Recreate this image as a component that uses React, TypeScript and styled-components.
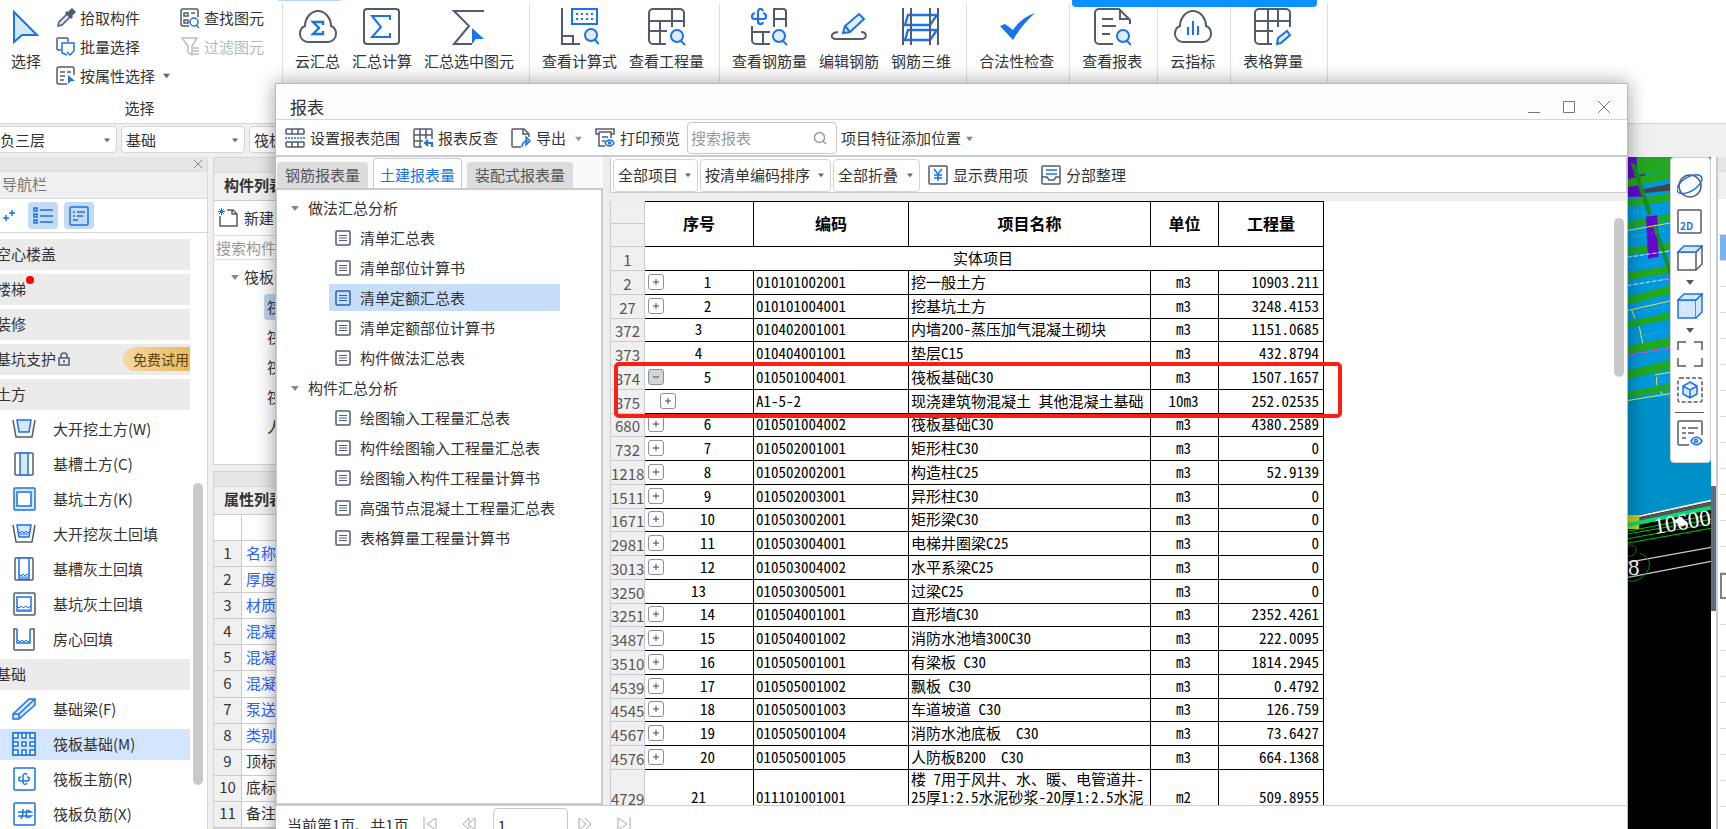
import React from "react";
import styled, { createGlobalStyle, css } from "styled-components";

const INK = "#545b6e";
const BLUE = "#1a73e8";
const PALE = "#d6e6fb";

const GlobalStyle = createGlobalStyle`
  * { box-sizing: border-box; }
  html, body { margin: 0; height: 100%; overflow: hidden; }
  body {
    font-family: "Noto Sans CJK SC", "Open Sans", sans-serif;
    font-size: 15px;
    line-height: 22px;
    color: #333;
    background: #f0f0f0;
  }
  button, input, select { font: inherit; color: inherit; margin: 0; }
  svg { display: block; flex: none; }
`;

const plainButton = css`
  display: flex;
  align-items: center;
  padding: 0;
  border: 0;
  background: none;
  white-space: nowrap;
  cursor: pointer;
`;

/* ---------- icons ---------- */

type IconProps = { size?: number; box?: number; children: React.ReactNode; w?: number };
const Icon = ({ size = 20, box = 20, w = 1.5, children }: IconProps) => (
  <svg width={size} height={size} viewBox={`0 0 ${box} ${box}`} fill="none" stroke={INK} strokeWidth={w} aria-hidden="true">
    {children}
  </svg>
);

const Caret = ({ size = 7, color = "#666" }: { size?: number; color?: string }) => (
  <svg width={size} height={size} viewBox="0 0 8 8" aria-hidden="true">
    <path d="M0 2h8L4 7z" fill={color} />
  </svg>
);

const Lens = ({ x, y, r = 6 }: { x: number; y: number; r?: number }) => (
  <g stroke={BLUE} strokeWidth="2">
    <circle cx={x} cy={y} r={r} fill="#e2edfc" />
    <path d={`M${x + r - 2} ${y + r - 1}l4 4`} />
  </g>
);

const CLOUD = "M9 34a8 8 0 0 1-8-8c0-4 2-7 5-8 0-8 6-15 13-15s13 7 13 15c3 1 5 4 5 8a8 8 0 0 1-8 8z";

const ribbonIcons: Record<string, React.ReactNode> = {
  arrow: <path d="M7 4v30l8-7h15z" fill={PALE} stroke={BLUE} strokeWidth="2" />,
  cloudSum: (
    <>
      <path d={CLOUD} />
      <path d="M24 17v-3H14l6 6-6 6h10v-3" stroke={BLUE} strokeWidth="2.4" />
    </>
  ),
  sum: (
    <>
      <rect x="1" y="1" width="35" height="35" rx="3" />
      <path d="M27 12V8H9l9 11-9 10h18v-4" stroke={BLUE} />
    </>
  ),
  sumPick: (
    <>
      <path d="M34 3H4l15 15L4 36h18" />
      <path d="M22 20v16l4-5h8z" fill={BLUE} stroke="none" />
    </>
  ),
  formula: (
    <>
      <path d="M1 0v36h18M1 28h11v8" />
      <rect x="11" y="1" width="25" height="15" stroke={BLUE} />
      <path d="M15 6h18M15 11h18" stroke={BLUE} strokeDasharray="2 3" />
      <Lens x={30} y={27} />
    </>
  ),
  quantity: (
    <>
      <path d="M18 36H5a4 4 0 0 1-4-4V5a4 4 0 0 1 4-4h27a4 4 0 0 1 4 4v14M1 13h35M1 23h18M12 13v23M24 1v18" />
      <Lens x={29} y={28} />
    </>
  ),
  rebarQty: (
    <>
      <path d="M23 19V1h9a3 3 0 0 1 3 3v15M23 11h12M1 18v14a4 4 0 0 0 4 4h14M1 24h18M12 24v12" />
      <path d="M12 3c-1-3-5-3-5 1v9c0 4 4 4 5 1M4 5c-4 1-4 6 0 6h8c4 0 4-5 0-6" stroke={BLUE} strokeWidth="2.2" />
      <Lens x={28} y={28} />
    </>
  ),
  rebarEdit: (
    <>
      <path d="M8 24c-8 1-8 7-2 7h25c7 0 6-7 0-7" />
      <path d="M13 25l2-7L29 6l5 5-14 13zM15 18l5 6" fill="#e2edfc" stroke={BLUE} />
    </>
  ),
  rebar3d: (
    <>
      <path d="M6 7h29l-7 10H3zM6 22h29l-7 10H3z" stroke={BLUE} strokeWidth="2.4" />
      <path d="M1 0v37M9 0v37M28 0v37M36 0v37" />
    </>
  ),
  check: <path d="M2 18l5-2 8 6C20 14 28 8 37 5 28 13 21 22 15 32z" fill={BLUE} stroke="none" />,
  report: (
    <>
      <path d="M20 36H6a4 4 0 0 1-4-4V5a4 4 0 0 1 4-4h20l11 11v4M27 1v10h10M9 11h11M9 18h14M9 26h8" />
      <Lens x={30} y={28} />
    </>
  ),
  cloudIndex: (
    <>
      <path d={CLOUD} />
      <path d="M14 27v-8M19 27V13M24 27v-9" stroke={BLUE} />
    </>
  ),
  sheetEdit: (
    <>
      <path d="M18 36H5a4 4 0 0 1-4-4V5a4 4 0 0 1 4-4h27a4 4 0 0 1 4 4v14M1 13h35M1 23h18M14 1v35M24 1v18" />
      <path d="M23 36l1-6 9-7 3 4-9 8z" fill="#e2edfc" stroke={BLUE} />
    </>
  ),
};

const BucketIcon = ({ filled }: { filled?: boolean }) => (
  <Icon size={24} box={24}>
    <path d="M1 3l3 17h16l3-17" />
    <path d="M5 3h14l-2 12H7z" fill={PALE} stroke={BLUE} />
    {filled && <path d="M6 9l2 2 2-2 2 2 2-2 2 2 2-2M8 12h8" stroke={BLUE} strokeWidth="1" />}
  </Icon>
);

const navIcons: Record<string, React.ReactNode> = {
  bucket: <BucketIcon />,
  bucketFill: <BucketIcon filled />,
  trench: (
    <Icon size={24} box={24}>
      <rect x="3" y="1" width="18" height="22" rx="1" />
      <path d="M8 1h8v22H8z" fill={PALE} stroke={BLUE} />
    </Icon>
  ),
  pit: (
    <Icon size={24} box={24}>
      <rect x="2" y="1" width="21" height="22" rx="1" fill={PALE} stroke={BLUE} />
      <rect x="5" y="5" width="14" height="14" fill="#fff" stroke={BLUE} />
    </Icon>
  ),
  trenchFill: (
    <Icon size={24} box={24}>
      <rect x="3" y="1" width="18" height="22" rx="1" />
      <path d="M7 1h10v21H7z" fill="#fff" stroke={BLUE} />
      <path d="M7 17l2 2 2-2 2 2 2-2 2 2M8 20h8" stroke={BLUE} strokeWidth="1" />
    </Icon>
  ),
  pitFill: (
    <Icon size={24} box={24}>
      <rect x="2" y="1" width="21" height="22" rx="1" />
      <path d="M5 5h14v14H5z" stroke={BLUE} />
      <path d="M5 14l2 2 2-2 2 2 3-2 2 2 3-2M6 18h12" stroke={BLUE} strokeWidth="1" />
    </Icon>
  ),
  room: (
    <Icon size={24} box={24}>
      <path d="M5 2H2v20a1 1 0 0 0 1 1h18a1 1 0 0 0 1-1V2h-4" />
      <path d="M5 2v14h13V2" stroke={BLUE} />
      <path d="M6 13l2 2 2-2 2 2 2-2 2 2 2-2" stroke={BLUE} strokeWidth="1" />
    </Icon>
  ),
  beam: (
    <Icon size={24} box={24}>
      <path d="M1 17L17 2h6v6L7 22H1zM1 17h6v5M7 17L23 2" fill={PALE} stroke={BLUE} />
    </Icon>
  ),
  raft: (
    <Icon size={24} box={24}>
      <rect x="1" y="1" width="22" height="22" fill={PALE} stroke={BLUE} />
      <path d="M1 1h5v5H1zM10 1h4v5h-4zM18 1h5v5h-5zM1 10h5v4H1zM10 10h4v4h-4zM18 10h5v4h-5zM1 18h5v5H1zM10 18h4v5h-4zM18 18h5v5h-5z" fill="#fff" stroke={BLUE} />
    </Icon>
  ),
  mainBar: (
    <Icon size={24} box={24}>
      <rect x="2" y="1" width="21" height="22" rx="1" fill="#fff" stroke={BLUE} />
      <path d="M15 8c-1-2-4-2-4 1v6c0 3 3 3 4 1M9 10c-3 0-3 4 0 4h6c3 0 3-4 0-4" stroke={BLUE} />
    </Icon>
  ),
  negBar: (
    <Icon size={24} box={24}>
      <rect x="2" y="1" width="21" height="22" rx="1" fill="#fff" stroke={BLUE} />
      <path d="M6 10h13l-3-2M6 14h13l-3 2M11 7v4c0 2-1 4-2 6M15 8c-1 3-1 6 0 8" stroke={BLUE} />
    </Icon>
  ),
};

/* ---------- page frame ---------- */

const Desktop = styled.div`
  position: relative;
  display: flex;
  flex-direction: column;
  height: 100vh;
  overflow: hidden;
  background: #f0f0f0;
`;

const Ribbon = styled.header`
  display: flex;
  flex: none;
  height: 124px;
  padding-top: 3px;
  background: #fff;
  border-bottom: 1px solid #d4d6d8;
`;

const RibbonGroup = styled.div<{ $wide?: boolean }>`
  display: flex;
  align-items: flex-start;
  gap: 12px;
  padding: 5px ${(p) => (p.$wide ? 24 : 15)}px 0 12px;
  border-right: 1px solid #dcdee0;
`;

const RibbonButton = styled.button`
  ${plainButton}
  flex-direction: column;
  gap: 4px;
`;

const SelectGroup = styled.div`
  width: 283px;
  padding-left: 7px;
  border-right: 1px solid #dcdee0;
`;
const SelectColumns = styled.div`
  display: flex;
  height: 88px;
  gap: 11px;
  & > ${RibbonButton} { align-self: flex-start; margin-top: 5px; }
`;
const ToolColumn = styled.div`
  width: 113px;
`;
const SmallTool = styled.button`
  ${plainButton}
  height: 29px;
  gap: 4px;
  &:disabled { color: #b8b8b8; }
  & > svg:nth-of-type(2) { margin-left: 4px; }
`;
const GroupName = styled.div`
  padding: 6px 10px 0 0;
  text-align: center;
`;

const TopTab = styled.div`
  position: absolute;
  top: 0;
  left: 1072px;
  width: 245px;
  height: 7px;
  border-radius: 0 0 4px 4px;
  background: #0a91ff;
`;
const TopHint = styled.div`
  position: absolute;
  top: 0;
  left: 278px;
  width: 63px;
  height: 1px;
  background: #b3d9ff;
`;

const ComboBar = styled.div`
  display: flex;
  flex: none;
  gap: 4px;
  height: 33px;
  padding: 2px 0 4px;
`;

const SelectWrap = styled.span<{ $w: number; $h?: number }>`
  display: flex;
  align-items: center;
  width: ${(p) => p.$w}px;
  height: ${(p) => p.$h ?? 27}px;
  padding-right: 6px;
  background: #fff;
  border: 1px solid #d2d4d6;
  border-radius: 4px;
  select {
    appearance: none;
    flex: 1;
    min-width: 0;
    padding: 0 0 0 4px;
    border: 0;
    background: none;
    outline: 0;
  }
`;
const EdgeSelectWrap = styled(SelectWrap)`
  border-left: 0;
  border-radius: 0 4px 4px 0;
  select { padding: 0; }
`;

const Workspace = styled.div`
  display: flex;
  flex: 1;
  min-height: 0;
`;

/* ---------- navigation panel ---------- */

const NavPanel = styled.nav`
  display: flex;
  flex-direction: column;
  flex: none;
  width: 208px;
  background: #fff;
  border-right: 1px solid #d8d8d8;
`;
const GripBar = styled.div`
  display: flex;
  flex: none;
  align-items: center;
  justify-content: flex-end;
  height: 15px;
  padding-right: 4px;
  background: #e6e6e6;
  border-bottom: 1px solid #dcdcdc;
`;
const NavTitle = styled.div`
  flex: none;
  height: 27px;
  padding: 1px 2px;
  color: #777;
  background: #f0f0f0;
  border-bottom: 1px solid #dcdcdc;
`;
const NavTools = styled.div`
  display: flex;
  flex: none;
  align-items: center;
  gap: 6px;
  height: 34px;
  padding: 0 3px;
  border-bottom: 1px solid #d4d6d8;
`;
const NavToggle = styled.button<{ $on?: boolean }>`
  ${plainButton}
  width: ${(p) => (p.$on ? 30 : 19)}px;
  height: 27px;
  border-radius: 4px;
  background: ${(p) => (p.$on ? "#c3dbf5" : "none")};
  justify-content: ${(p) => (p.$on ? "center" : "flex-start")};
`;
const NavBody = styled.div`
  display: flex;
  flex: 1;
  min-height: 0;
  gap: 3px;
`;
const NavList = styled.div`
  display: flex;
  flex-direction: column;
  gap: 4px;
  width: 194px;
  margin-left: -4px;
  padding-top: 6px;
  overflow: hidden;
`;
const NavGroup = styled.button`
  ${plainButton}
  flex: none;
  height: 31px;
  padding-bottom: 1px;
  background: #ebebeb;
`;
const NavItem = styled.button<{ $on?: boolean }>`
  ${plainButton}
  flex: none;
  gap: 17px;
  height: 31px;
  padding: 0 0 2px 16px;
  background: ${(p) => (p.$on ? "#d3e6fd" : "#fff")};
`;
const Dot = styled.i`
  align-self: flex-start;
  width: 8px;
  height: 8px;
  margin-top: 2px;
  border-radius: 50%;
  background: #f00;
`;
const Trial = styled.span`
  margin-left: auto;
  padding: 0 1px 0 10px;
  font-size: 14px;
  line-height: 24px;
  color: #5f3f12;
  border-radius: 12px 0 0 12px;
  background: linear-gradient(90deg, #f6d8a6, #e9bb5d);
`;
const NavThumb = styled.div`
  width: 10px;
  height: 302px;
  margin-top: 250px;
  border-radius: 5px;
  background: #c9c9c9;
`;

/* ---------- component and property panels ---------- */

const SideColumn = styled.div`
  display: flex;
  flex-direction: column;
  flex: none;
  gap: 6px;
  width: 300px;
  margin-left: 5px;
`;
const SidePanel = styled.section<{ $h?: number }>`
  display: flex;
  flex-direction: column;
  flex: ${(p) => (p.$h ? "none" : "1")};
  height: ${(p) => (p.$h ? `${p.$h}px` : "auto")};
  min-height: 0;
  background: #fff;
  border: 1px solid #d2d4d6;
`;
const SideTitle = styled.h2`
  flex: none;
  height: 28px;
  margin: 0;
  padding: 1px 10px;
  font-size: 15px;
  line-height: 22px;
  background: #f0f0f0;
  border-bottom: 1px solid #c8ccd0;
`;
const NewRow = styled.button`
  ${plainButton}
  flex: none;
  gap: 6px;
  height: 34px;
  padding-left: 4px;
`;
const SideSearch = styled.input`
  flex: none;
  height: 25px;
  padding: 0 2px;
  border: 1px solid #dcdcdc;
  border-width: 1px 0;
  outline: 0;
  &::placeholder { color: #999; opacity: 1; }
`;
const SideTree = styled.ul`
  margin: 0;
  padding: 2px 0 0 17px;
  list-style: none;
`;
const SideNode = styled.li`
  display: flex;
  align-items: center;
  gap: 5px;
  height: 30px;
`;
const SideLeaf = styled.li<{ $on?: boolean }>`
  height: 26px;
  margin: 2px 0 4px 33px;
  padding: 2px 3px;
  border-radius: 3px 0 0 3px;
  background: ${(p) => (p.$on ? "#bcd5f1" : "none")};
`;
const PropTable = styled.table`
  width: 100%;
  height: 100%;
  border-collapse: separate;
  border-spacing: 0;
  th, td { padding: 0 4px 2px; border: 1px solid #c9cbcd; border-width: 0 1px 1px 0; }
  th { width: 28px; padding: 0 0 2px; font-weight: 400; background: #f0f0f0; }
`;
const PropHost = styled.div`
  flex: 1;
  min-height: 0;
  tr { height: 26px; }
  tr:first-child th { background: #fff; }
`;
const PropName = styled.td<{ $blue: boolean }>`
  color: ${(p) => (p.$blue ? "#2962ff" : "#333")};
`;

/* ---------- drawing view ---------- */

const ViewArea = styled.div`
  position: relative;
  display: flex;
  flex: 1;
  justify-content: flex-end;
  overflow: hidden;
  background: #000;
`;
const ViewTools = styled.div`
  position: absolute;
  top: 0;
  right: 0;
  display: flex;
  flex-direction: column;
  align-items: center;
  width: 41px;
  height: 306px;
  padding: 15px 2px 0 0;
  gap: 10px;
  background: #fff;
  border: 1px solid #d0d0d0;
  border-radius: 4px;
`;
const ViewTool = styled.button<{ $menu?: boolean }>`
  ${plainButton}
  flex: none;
  flex-direction: column;
  gap: 7px;
  margin-bottom: ${(p) => (p.$menu ? -3 : 0)}px;
`;
const ToolRule = styled.hr`
  flex: none;
  width: 29px;
  margin: -1px 0 -3px;
  border: 0;
  border-top: 1px solid ${INK};
`;
const ViewScroll = styled.div`
  flex: none;
  width: 5px;
  padding-top: 329px;
  background: #fff;
  &::before { content: ""; display: block; height: 125px; background: #5f6b7a; }
`;
const RightPanel = styled.aside`
  flex: none;
  width: 10px;
  background: #fff;
  border-left: 2px solid #c8ccd0;
`;
const RightHead = styled.div`
  height: 27px;
  background: #f0f0f0;
`;
const RightGap = styled.div`
  height: 36px;
  border-bottom: 1px solid #dcdcdc;
`;
const RightCell = styled.div<{ $on?: boolean; $focus?: boolean }>`
  height: 26px;
  margin-left: 2px;
  background: ${(p) => (p.$on ? "#76b4f5" : "#fff")};
  border: 0 solid #dcdcdc;
  border-bottom-width: 1px;
  ${(p) => p.$focus && "border: 2px solid #808080; border-right: 0;"}
`;

/* ---------- report window ---------- */

const Window = styled.section`
  position: absolute;
  top: 83px;
  right: 98px;
  bottom: -20px;
  left: 275px;
  display: flex;
  flex-direction: column;
  background: #fff;
  border: 1px solid #b8bbbe;
  box-shadow: 0 0 18px rgba(0, 0, 0, 0.38);
`;
const TitleBar = styled.div`
  display: flex;
  flex: none;
  align-items: center;
  justify-content: space-between;
  height: 36px;
  padding: 11px 16px 0 14px;
  font-size: 17px;
  background: #fdfdfd;
  border-bottom: 1px solid #d4d6d8;
`;
const WindowButtons = styled.div`
  display: flex;
  gap: 21px;
`;
const WindowButton = styled.button`
  ${plainButton}
`;
const Toolbar = styled.div`
  display: flex;
  flex: none;
  align-items: center;
  gap: 7px;
  height: 37px;
  padding: 1px 9px 0;
  border-bottom: 2px solid #c8ccd0;
`;
const ToolGroup = styled.div<{ $gap: number }>`
  display: flex;
  align-items: center;
  gap: ${(p) => p.$gap}px;
`;
const ToolButton = styled.button`
  ${plainButton}
  gap: 5px;
  & > svg:nth-of-type(2) { margin-left: 4px; }
`;
const SearchBox = styled.label`
  display: flex;
  align-items: center;
  width: 150px;
  height: 32px;
  padding: 0 9px 0 3px;
  border: 1px solid #c8c8c8;
  border-radius: 4px;
  input { flex: 1; min-width: 0; padding: 0; border: 0; outline: 0; background: none; }
  input::placeholder { color: #999; opacity: 1; }
`;
const WindowBody = styled.div`
  display: flex;
  flex: 1;
  min-height: 0;
  gap: 7px;
  background: #eeeeee;
`;
const LeftPane = styled.div`
  display: flex;
  flex-direction: column;
  flex: none;
  width: 327px;
`;
const Tabs = styled.div`
  display: flex;
  flex: none;
  align-items: flex-end;
  gap: 5px;
  height: 31px;
  padding-left: 1px;
  background: #fafafa;
`;
const Tab = styled.button<{ $on?: boolean }>`
  ${plainButton}
  height: ${(p) => (p.$on ? 32 : 26)}px;
  padding: ${(p) => (p.$on ? "0 6px 0" : "0 8px")};
  color: ${(p) => (p.$on ? BLUE : "#555")};
  background: ${(p) => (p.$on ? "#fff" : "#dcdcdc")};
  border: ${(p) => (p.$on ? "1px solid #c8ccd0" : "0")};
  border-bottom: 0;
  border-radius: 4px 4px 0 0;
  margin-bottom: ${(p) => (p.$on ? -2 : 0)}px;
`;
const Tree = styled.div`
  flex: 1;
  min-height: 0;
  padding-top: 3px;
  background: #fff;
  border: 2px solid #c8ccd0;
  border-left-width: 1px;
`;
const TreeNode = styled.button`
  ${plainButton}
  gap: 9px;
  height: 30px;
  padding-left: 14px;
`;
const TreeLeaf = styled.button<{ $on?: boolean }>`
  ${plainButton}
  gap: 9px;
  width: 231px;
  height: 27px;
  margin: 1px 0 3px 52px;
  padding-left: 6px;
  background: ${(p) => (p.$on ? "#c6defa" : "none")};
  & + & { margin-top: -1px; }
`;
const LeafList = styled.div`
  display: grid;
  grid-auto-rows: 30px;
  ${TreeLeaf} { margin: 1px 0 2px 52px; }
`;
const RightPane = styled.div`
  display: flex;
  flex-direction: column;
  flex: 1;
  min-width: 0;
  gap: 8px;
`;
const FilterBar = styled.div`
  display: flex;
  flex: none;
  align-items: center;
  gap: 2px;
  height: 36px;
  padding: 0 2px;
  background: #fff;
  border: 1px solid #c8ccd0;
  border-top-color: #fff;
  & > button { margin-left: 6px; }
  & > button + button { margin-left: 11px; }
`;
const Sheet = styled.div`
  position: relative;
  flex: 1;
  min-height: 0;
  overflow: hidden;
  background: #fff;
`;
const SheetThumb = styled.div`
  position: absolute;
  top: 17px;
  right: 3px;
  width: 10px;
  height: 159px;
  border-radius: 5px;
  background: #c9c9c9;
`;
const Marker = styled.div`
  position: absolute;
  top: 161px;
  left: 4px;
  width: 728px;
  height: 56px;
  border: 4px solid #ff1e14;
  border-radius: 5px;
`;
const DataTable = styled.table`
  table-layout: fixed;
  width: 714px;
  border-collapse: separate;
  border-spacing: 0;
  line-height: 18px;
  color: #000;
  font-feature-settings: "hwid" 1;
  tr { height: 24px; }
  thead tr { height: 23px; }
  tbody tr:nth-child(4n) { height: 23px; }
  th, td {
    padding: 0 4px 2px;
    border: 0 solid #000;
    border-width: 0 1px 1px 0;
    white-space: pre;
  }
  thead th { font-size: 16px; border-top-width: 1px; }
`;
const RowNo = styled.th<{ $tail?: boolean }>`
  && {
    padding: 2px 0 0;
    font-size: 15px;
    font-weight: 400;
    vertical-align: ${(p) => (p.$tail ? "bottom" : "middle")};
    color: #555;
    background: #f0f0f0;
    border: 1px solid #c8ccd0;
    border-width: 0 1px 1px;
    font-feature-settings: normal;
  }
`;
const Cell = styled.td<{ $align?: "center" | "right"; $tail?: boolean }>`
  text-align: ${(p) => p.$align ?? "left"};
  vertical-align: ${(p) => (p.$tail ? "bottom" : "middle")};
  && { padding-left: 2px; }
`;
const SeqBox = styled.div<{ $indent?: boolean }>`
  display: flex;
  align-items: center;
  gap: 2px;
  padding-left: ${(p) => (p.$indent ? 13 : 1)}px;
  span { flex: 1; text-align: center; }
`;
const Expander = styled.button<{ $open?: boolean }>`
  ${plainButton}
  justify-content: center;
  width: 16px;
  height: 16px;
  border: 1px solid #8d8f98;
  border-radius: 3px;
  background: ${(p) => (p.$open ? "#d4d4dc" : "#fff")};
`;
const Footer = styled.div`
  display: flex;
  flex: none;
  align-items: flex-start;
  height: 43px;
  padding: 2px 11px;
  border-top: 1px solid #c8ccd0;
`;
const PageText = styled.span`
  flex: none;
  min-width: 121px;
  padding-top: 6px;
  white-space: nowrap;
`;
const PageButton = styled.button`
  ${plainButton}
  flex: none;
  width: 39px;
  height: 32px;
  padding-left: 14px;
`;
const PageInput = styled.input`
  width: 75px;
  height: 34px;
  margin: 0 -4px 0 6px;
  padding: 0 4px;
  border: 1px solid #c8c8c8;
  border-radius: 4px;
  outline: 0;
`;

/* ---------- data ---------- */

const ribbonGroups: [string, string][][] = [
  [["cloudSum", "云汇总"], ["sum", "汇总计算"], ["sumPick", "汇总选中图元"]],
  [["formula", "查看计算式"], ["quantity", "查看工程量"]],
  [["rebarQty", "查看钢筋量"], ["rebarEdit", "编辑钢筋"], ["rebar3d", "钢筋三维"]],
  [["check", "合法性检查"]],
  [["report", "查看报表"]],
  [["cloudIndex", "云指标"]],
  [["sheetEdit", "表格算量"]],
];

const navEarth = [
  ["bucket", "大开挖土方(W)"],
  ["trench", "基槽土方(C)"],
  ["pit", "基坑土方(K)"],
  ["bucketFill", "大开挖灰土回填"],
  ["trenchFill", "基槽灰土回填"],
  ["pitFill", "基坑灰土回填"],
  ["room", "房心回填"],
];
const navBase = [
  ["beam", "基础梁(F)"],
  ["raft", "筏板基础(M)"],
  ["mainBar", "筏板主筋(R)"],
  ["negBar", "筏板负筋(X)"],
];

const props = ["名称", "厚度", "材质", "混凝", "混凝", "混凝", "泵送", "类别", "顶标", "底标", "备注"];

const reportTree = [
  { name: "做法汇总分析", items: ["清单汇总表", "清单部位计算书", "清单定额汇总表", "清单定额部位计算书", "构件做法汇总表"] },
  {
    name: "构件汇总分析",
    items: ["绘图输入工程量汇总表", "构件绘图输入工程量汇总表", "绘图输入构件工程量计算书", "高强节点混凝土工程量汇总表", "表格算量工程量计算书"],
  },
];

type Row = { no: string; mark?: "plus" | "minus" | "child"; seq: string; code: string; name: string; unit: string; qty: string; tail?: boolean };
const row = (no: string, mark: Row["mark"], seq: string, code: string, name: string, unit: string, qty: string, tail = false): Row => ({
  no, mark, seq, code, name, unit, qty, tail,
});
const rows: Row[] = [
  row("2", "plus", "1", "010101002001", "挖一般土方", "m3", "10903.211"),
  row("27", "plus", "2", "010101004001", "挖基坑土方", "m3", "3248.4153"),
  row("372", undefined, "3", "010402001001", "内墙200-蒸压加气混凝土砌块", "m3", "1151.0685"),
  row("373", undefined, "4", "010404001001", "垫层C15", "m3", "432.8794"),
  row("374", "minus", "5", "010501004001", "筏板基础C30", "m3", "1507.1657"),
  row("375", "child", "", "A1-5-2", "现浇建筑物混凝土 其他混凝土基础", "10m3", "252.02535"),
  row("680", "plus", "6", "010501004002", "筏板基础C30", "m3", "4380.2589"),
  row("732", "plus", "7", "010502001001", "矩形柱C30", "m3", "0"),
  row("1218", "plus", "8", "010502002001", "构造柱C25", "m3", "52.9139"),
  row("1511", "plus", "9", "010502003001", "异形柱C30", "m3", "0"),
  row("1671", "plus", "10", "010503002001", "矩形梁C30", "m3", "0"),
  row("2981", "plus", "11", "010503004001", "电梯井圈梁C25", "m3", "0"),
  row("3013", "plus", "12", "010503004002", "水平系梁C25", "m3", "0"),
  row("3250", undefined, "13", "010503005001", "过梁C25", "m3", "0"),
  row("3251", "plus", "14", "010504001001", "直形墙C30", "m3", "2352.4261"),
  row("3487", "plus", "15", "010504001002", "消防水池墙300C30", "m3", "222.0095"),
  row("3510", "plus", "16", "010505001001", "有梁板 C30", "m3", "1814.2945"),
  row("4539", "plus", "17", "010505001002", "飘板 C30", "m3", "0.4792"),
  row("4545", "plus", "18", "010505001003", "车道坡道 C30", "m3", "126.759"),
  row("4567", "plus", "19", "010505001004", "消防水池底板  C30", "m3", "73.6427"),
  row("4576", "plus", "20", "010505001005", "人防板B200  C30", "m3", "664.1368"),
  row("4729", undefined, "21", "011101001001", "楼 7用于风井、水、暖、电管道井-\n25厚1:2.5水泥砂浆-20厚1:2.5水泥", "m2", "509.8955", true),
];

/* ---------- pieces ---------- */

const Dropdown = ({ label, value, w, h, edge }: { label: string; value: string; w: number; h?: number; edge?: boolean }) => {
  const Wrap = edge ? EdgeSelectWrap : SelectWrap;
  return (
    <Wrap $w={w} $h={h}>
      <select aria-label={label}>
        <option>{value}</option>
      </select>
      <Caret size={6} />
    </Wrap>
  );
};

const SheetIcon = ({ on }: { on?: boolean }) => (
  <Icon size={16} box={16}>
    <rect x="1" y="1" width="14" height="14" rx="1" stroke={on ? "#2f5f9e" : INK} />
    <path d="M4 5.500h8M4 8h8M4 10.500h8" strokeWidth="1" stroke={on ? "#2f5f9e" : INK} />
  </Icon>
);

const Sign = ({ minus }: { minus?: boolean }) => (
  <svg width="8" height="8" viewBox="0 0 8 8" stroke="#444a5c" aria-hidden="true">
    <path d={minus ? "M1 4h6" : "M1 4h6M4 1v6"} />
  </svg>
);

const Drawing = () => {
  const bands = [
    [88, 60, 26], [150, 130, 22], [215, 190, 22], [295, 275, 22], [368, 345, 24], [440, 405, 26],
    [515, 485, 22], [588, 562, 26], [662, 628, 28], [725, 700, 20],
  ];
  return (
    <svg width="84" height="672" viewBox="0 0 84 672" aria-hidden="true">
      <path d="M0 0h84v344L0 360z" fill="#0099dd" />
      <path d="M0 240h84v104L0 360z" fill="#0090c8" />
      <g transform="translate(-27 -7) scale(.3333)">
        <path d="M81 20h171v40L81 76z" fill="#22a822" />
        <path d="M81 20h29v40l25 80H81z" fill="#6408d0" />
        <path d="M115 75l20-5v20h-20zM130 118l122-26v26l-122 12z" fill="#444" />
        {bands.map(([l, r, h]) => (
          <path key={l} d={`M81 ${l}L215 ${r}v${h}L81 ${l + h - 2}z`} fill="#22a822" />
        ))}
        <path d="M138 200l34-4 4 124-32 6z" fill="#6408d0" />
        <path d="M92 40h12l52 150-12 8zM158 228l10-6 46 140v30z" fill="#1c8c1c" />
        <g strokeWidth="3" fill="none">
          <path d="M81 242L215 218M81 482L215 452M81 752L215 730M95 480l10 26M118 530l10 50M165 675l45-8M170 680v25M180 725l10 8" stroke="#e8e83a" />
          <path d="M81 322L215 302M81 407L215 385" stroke="#cfe8ff" strokeDasharray="14 5" />
          <path d="M81 616L215 594M190 388l25-4" stroke="#e33ae8" />
          <path d="M90 190l40-8M95 260l100-16M90 350l90-14M130 480l80-12M120 560l80-20" stroke="#8fd0f0" strokeDasharray="3 9" strokeWidth="2" />
        </g>
      </g>
      <g transform="translate(-67 303) scale(.3333)">
        <path d="M204 180l249-55v20L204 195z" fill="#555" />
        <path d="M204 176l249-54" stroke="#fff" strokeWidth="5" />
        <path d="M204 165h34v42h-34z" fill="#c8cc1e" />
        <path d="M204 195l249-52" stroke="#00e070" strokeWidth="12" />
        <path d="M204 214l249-50M204 236l249-46M204 249l249-44M204 222l249-44" stroke="#00c800" strokeWidth="3" />
        <path d="M204 307l256-46M204 352l249-48" stroke="#ccc" strokeWidth="4" />
        <path d="M452 254l14 12-12 14z" fill="#aaa" />
        <path d="M340 182l25-12 18 22-18 8z" fill="#fff" />
        <path d="M204 256c18-4 26 6 24 18s-14 16-24 14M240 280c26 8 34 30 24 50s-36 40-60 32" stroke="#0a8a0a" strokeWidth="3" fill="none" />
      </g>
      <g fill="#fff" fontFamily="Liberation Serif, serif">
        <text x="28" y="377" fontSize="23" transform="rotate(-9 28 377)">10600</text>
        <text x="1" y="418" fontSize="23">8</text>
      </g>
    </svg>
  );
};

const Cube = ({ solid }: { solid?: boolean }) => (
  <Icon size={26} box={26}>
    <path d="M1 7h18v18H1z" fill={solid ? PALE : "none"} stroke={solid ? BLUE : INK} />
    <path d="M19 7l6-6v18l-6 6" fill={solid ? PALE : "none"} stroke={solid ? BLUE : INK} />
    <path d="M1 7l6-6h18l-6 6z" fill={PALE} stroke={BLUE} />
  </Icon>
);

/* ---------- app ---------- */

export default function App() {
  return (
    <>
      <GlobalStyle />
      <Desktop>
        <Ribbon>
          <SelectGroup>
            <SelectColumns>
              <RibbonButton>
                <Icon size={38} box={38} w={2}>{ribbonIcons.arrow}</Icon>
                选择
              </RibbonButton>
              <ToolColumn>
                <SmallTool>
                  <Icon>
                    <path d="M2 18l1-4 8-8 3 3-8 8z" fill={PALE} />
                    <path d="M10 4l6 6M12 6l4-4 2 2-4 4z" strokeWidth="3" />
                  </Icon>
                  拾取构件
                </SmallTool>
                <SmallTool>
                  <Icon>
                    <path d="M5 13H2a1 1 0 0 1-1-1V2a1 1 0 0 1 1-1h9a1 1 0 0 1 1 1v3" />
                    <path d="M11 18L6 16V6h12v8" stroke={BLUE} />
                    <path d="M11 15l3 3 4-4" stroke={BLUE} />
                  </Icon>
                  批量选择
                </SmallTool>
                <SmallTool>
                  <Icon>
                    <path d="M11 18H3a2 2 0 0 1-2-2V3a2 2 0 0 1 2-2h14a2 2 0 0 1 1 2v6M4 6h5M11 6h4M4 10h5M4 14h4" />
                    <path d="M12 9v9l3-3h4z" fill={BLUE} stroke="none" />
                  </Icon>
                  按属性选择
                  <Caret />
                </SmallTool>
              </ToolColumn>
              <ToolColumn>
                <SmallTool>
                  <Icon>
                    <path d="M9 18H3a2 2 0 0 1-2-2V3a2 2 0 0 1 2-2h14a2 2 0 0 1 1 2v6M4 5h4v3H4zM11 5h4M4 12h4v3H4z" />
                    <circle cx="14" cy="14" r="4" stroke={BLUE} />
                    <path d="M16 17l3 3" stroke={BLUE} />
                  </Icon>
                  查找图元
                </SmallTool>
                <SmallTool disabled>
                  <Icon>
                    <path d="M2 1h15l-5 8v9l-4-3V9zM13 11h6M13 14h6M13 17h6" stroke="#bdbdbd" />
                  </Icon>
                  过滤图元
                </SmallTool>
              </ToolColumn>
            </SelectColumns>
            <GroupName>选择</GroupName>
          </SelectGroup>
          {ribbonGroups.map((g, i) => (
            <RibbonGroup key={i} $wide={i === ribbonGroups.length - 1}>
              {g.map(([icon, label]) => (
                <RibbonButton key={label}>
                  <Icon size={38} box={38} w={2}>{ribbonIcons[icon]}</Icon>
                  {label}
                </RibbonButton>
              ))}
            </RibbonGroup>
          ))}
        </Ribbon>
        <TopHint />
        <TopTab />

        <ComboBar>
          <Dropdown label="楼层" value="负三层" w={117} edge />
          <Dropdown label="类型" value="基础" w={124} />
          <Dropdown label="构件" value="筏板基础" w={124} />
        </ComboBar>

        <Workspace>
          <NavPanel>
            <GripBar>
              <Icon size={10} box={10} w={1}><path d="M1 1l8 8M9 1L1 9" stroke="#888" /></Icon>
            </GripBar>
            <NavTitle>导航栏</NavTitle>
            <NavTools>
              <NavToggle aria-label="新增">
                <Icon size={14} box={14}><path d="M0 9h6M3 6v6M6 4h6M9 1v6" stroke={BLUE} /></Icon>
              </NavToggle>
              <NavToggle $on aria-label="列表">
                <Icon><path d="M1 2h3v3H1zM1 8h3v3H1zM1 14h3v3H1zM7 4h13M7 10h13M7 16h13" stroke={BLUE} /></Icon>
              </NavToggle>
              <NavToggle $on aria-label="分组">
                <Icon>
                  <rect x="1" y="1" width="18" height="18" rx="1" stroke={BLUE} />
                  <path d="M4 6h2M8 6h8M4 10h2M8 10h6M4 14h5" stroke={BLUE} />
                </Icon>
              </NavToggle>
            </NavTools>
            <NavBody>
              <NavList>
                <NavGroup>空心楼盖</NavGroup>
                <NavGroup>楼梯<Dot /></NavGroup>
                <NavGroup>装修</NavGroup>
                <NavGroup>
                  基坑支护
                  <Icon size={16} box={16} w={1.5}>
                    <path d="M3 7h10v7H3zM5 7V5a3 3 0 0 1 6 0v2M8 9v3" />
                  </Icon>
                  <Trial>免费试用</Trial>
                </NavGroup>
                <NavGroup>土方</NavGroup>
                {navEarth.map(([icon, label]) => (
                  <NavItem key={label}>{navIcons[icon]}{label}</NavItem>
                ))}
                <NavGroup>基础</NavGroup>
                {navBase.map(([icon, label]) => (
                  <NavItem key={label} $on={icon === "raft"}>{navIcons[icon]}{label}</NavItem>
                ))}
              </NavList>
              <NavThumb />
            </NavBody>
          </NavPanel>

          <SideColumn>
            <SidePanel $h={308}>
              <GripBar />
              <SideTitle>构件列表</SideTitle>
              <NewRow>
                <Icon>
                  <path d="M9 2h6l4 4v12H2V8M14 2v4h5" />
                  <path d="M1 1l5 5M6 1L1 6M0 3.500h7M3.500 0v7" stroke={BLUE} strokeWidth="1" />
                </Icon>
                新建
              </NewRow>
              <SideSearch placeholder="搜索构件" aria-label="搜索构件" />
              <SideTree>
                <SideNode><Caret size={8} color="#888" />筏板基础</SideNode>
                <SideLeaf $on>筏</SideLeaf>
                <SideLeaf>筏</SideLeaf>
                <SideLeaf>筏</SideLeaf>
                <SideLeaf>筏</SideLeaf>
                <SideLeaf>人</SideLeaf>
              </SideTree>
            </SidePanel>
            <SidePanel>
              <GripBar />
              <SideTitle>属性列表</SideTitle>
              <PropHost>
                <PropTable>
                  <tbody>
                    <tr><th /><td /></tr>
                    {props.map((p, i) => (
                      <tr key={i}>
                        <th scope="row">{i + 1}</th>
                        <PropName $blue={i < 8}>{p}</PropName>
                      </tr>
                    ))}
                  </tbody>
                </PropTable>
              </PropHost>
            </SidePanel>
          </SideColumn>

          <ViewArea>
            <Drawing />
            <ViewTools>
              <ViewTool aria-label="动态观察">
                <Icon size={26} box={26}>
                  <circle cx="13" cy="13" r="11" />
                  <ellipse cx="13" cy="11" rx="14" ry="7" stroke={BLUE} transform="rotate(-32 13 12)" />
                </Icon>
              </ViewTool>
              <ViewTool aria-label="二维">
                <Icon size={26} box={26}>
                  <rect x="1" y="1" width="23" height="23" rx="1" />
                  <text x="3" y="21" fontSize="10" fontWeight="700" fill={BLUE} stroke="none">2D</text>
                </Icon>
              </ViewTool>
              <ViewTool $menu aria-label="视图"><Cube /><Caret size={8} color={INK} /></ViewTool>
              <ViewTool $menu aria-label="着色"><Cube solid /><Caret size={8} color={INK} /></ViewTool>
              <ViewTool aria-label="全屏">
                <Icon size={26} box={26}><path d="M1 9V1h8M17 1h8v8M25 17v8h-8M9 25H1v-8" /></Icon>
              </ViewTool>
              <ViewTool aria-label="选择显示">
                <Icon size={26} box={26}>
                  <rect x="1" y="1" width="24" height="24" rx="2" strokeDasharray="4 2" />
                  <path d="M13 5l7 4v8l-7 4-7-4V9zM6 9l7 4 7-4M13 13v8" fill={PALE} stroke={BLUE} />
                </Icon>
              </ViewTool>
              <ToolRule />
              <ViewTool aria-label="显示设置">
                <Icon size={26} box={26}>
                  <path d="M12 25H2a1 1 0 0 1-1-1V2a1 1 0 0 1 1-1h22a1 1 0 0 1 1 1v13M5 8h4M11 8h10M5 13h4M11 13h6M5 18h4" />
                  <path d="M14 21c3-5 8-5 11 0-3 5-8 5-11 0z" stroke={BLUE} />
                  <circle cx="19" cy="21" r="1.500" stroke={BLUE} />
                </Icon>
              </ViewTool>
            </ViewTools>
          </ViewArea>
          <ViewScroll />
          <RightPanel>
            <GripBar />
            <RightHead />
            <RightGap />
            <RightCell $on />
            {Array.from({ length: 22 }, (_, i) => <RightCell key={i} $focus={i === 12} />)}
          </RightPanel>
        </Workspace>

        <Window>
          <TitleBar>
            报表
            <WindowButtons>
              <WindowButton aria-label="最小化"><Icon size={14} box={14} w={1}><path d="M1 12.500h12" stroke="#777" /></Icon></WindowButton>
              <WindowButton aria-label="最大化"><Icon size={14} box={14} w={1}><path d="M1.500 1.500h11v11h-11z" stroke="#777" /></Icon></WindowButton>
              <WindowButton aria-label="关闭"><Icon size={14} box={14} w={1}><path d="M1 1l12 12M13 1L1 13" stroke="#777" /></Icon></WindowButton>
            </WindowButtons>
          </TitleBar>

          <Toolbar>
            <ToolGroup $gap={13}>
              <ToolButton>
                <Icon>
                  <path d="M1 6V2a1 1 0 0 1 1-1h16a1 1 0 0 1 1 1v4M1 14v4a1 1 0 0 0 1 1h16a1 1 0 0 0 1-1v-4M1 6h18M1 14h18M7 1v5M13 1v5M7 14v5M13 14v5" />
                  <path d="M0 10h20" stroke={BLUE} strokeDasharray="2 1" />
                </Icon>
                设置报表范围
              </ToolButton>
              <ToolButton>
                <Icon>
                  <path d="M9 19H2a1 1 0 0 1-1-1V2a1 1 0 0 1 1-1h16a1 1 0 0 1 1 1v9M1 7h18M1 13h9M7 1v18M13 1v10" />
                  <path d="M19 19v-4h-7M15 12l-3 3 3 3" stroke={BLUE} strokeWidth="2" />
                </Icon>
                报表反查
              </ToolButton>
              <ToolButton>
                <Icon>
                  <path d="M10 19H2a1 1 0 0 1-1-1V2a1 1 0 0 1 1-1h11l5 5v3M12 1v5h6" />
                  <path d="M11 19c0-5 2-6 6-6M15 9l4 4-4 4z" stroke={BLUE} fill={BLUE} fillOpacity=".3" />
                </Icon>
                导出
                <Caret color="#999" />
              </ToolButton>
              <ToolButton>
                <Icon>
                  <path d="M4 6H1V1h18v5h-3M4 4h12v6M4 4v14h6M7 9h6M7 13h3" />
                  <path d="M10 15c2-4 7-4 9 0-2 4-7 4-9 0z" stroke={BLUE} />
                  <circle cx="14.500" cy="15" r="1" stroke={BLUE} />
                </Icon>
                打印预览
              </ToolButton>
            </ToolGroup>
            <ToolGroup $gap={4}>
              <SearchBox>
                <input placeholder="搜索报表" aria-label="搜索报表" />
                <Icon size={14} box={14} w={1.5}>
                  <circle cx="6.500" cy="6.500" r="5" stroke="#999" />
                  <path d="M10 10l3 3" stroke="#999" />
                </Icon>
              </SearchBox>
              <ToolButton>项目特征添加位置<Caret color="#888" /></ToolButton>
            </ToolGroup>
          </Toolbar>

          <WindowBody>
            <LeftPane>
              <Tabs>
                <Tab>钢筋报表量</Tab>
                <Tab $on>土建报表量</Tab>
                <Tab>装配式报表量</Tab>
              </Tabs>
              <Tree>
                {reportTree.map((g) => (
                  <React.Fragment key={g.name}>
                    <TreeNode><Caret size={8} color="#888" />{g.name}</TreeNode>
                    <LeafList>
                      {g.items.map((t) => {
                        const on = t === "清单定额汇总表";
                        return <TreeLeaf key={t} $on={on}><SheetIcon on={on} />{t}</TreeLeaf>;
                      })}
                    </LeafList>
                  </React.Fragment>
                ))}
              </Tree>
            </LeftPane>

            <RightPane>
              <FilterBar>
                <Dropdown label="项目" value="全部项目" w={85} h={33} />
                <Dropdown label="排序" value="按清单编码排序" w={131} h={33} />
                <Dropdown label="折叠" value="全部折叠" w={87} h={33} />
                <ToolButton>
                  <Icon>
                    <rect x="1" y="1" width="18" height="18" rx="1" />
                    <path d="M6 4l4 5 4-5M10 9v7M6 10h8M6 13h8" stroke={BLUE} />
                  </Icon>
                  显示费用项
                </ToolButton>
                <ToolButton>
                  <Icon>
                    <rect x="1" y="1" width="18" height="18" rx="1" />
                    <path d="M5 5h11M5 9h11" stroke={BLUE} />
                    <path d="M1 12h5l2 3h5l2-3h4" />
                  </Icon>
                  分部整理
                </ToolButton>
              </FilterBar>
              <Sheet>
                <DataTable>
                  <colgroup>
                    <col width="35" /><col width="109" /><col width="155" /><col width="242" /><col width="68" /><col width="105" />
                  </colgroup>
                  <thead>
                    <tr>
                      <RowNo />
                      <th rowSpan={2}>序号</th>
                      <th rowSpan={2}>编码</th>
                      <th rowSpan={2}>项目名称</th>
                      <th rowSpan={2}>单位</th>
                      <th rowSpan={2}>工程量</th>
                    </tr>
                    <tr><RowNo /></tr>
                  </thead>
                  <tbody>
                    <tr><RowNo>1</RowNo><Cell colSpan={5} $align="center">实体项目</Cell></tr>
                    {rows.map((r) => (
                      <tr key={r.no}>
                        <RowNo scope="row" $tail={r.tail}>{r.no}</RowNo>
                        <Cell $tail={r.tail}>
                          <SeqBox $indent={r.mark === "child"}>
                            {r.mark && (
                              <Expander $open={r.mark === "minus"} aria-label={r.mark === "minus" ? "折叠" : "展开"}>
                                <Sign minus={r.mark === "minus"} />
                              </Expander>
                            )}
                            <span>{r.seq}</span>
                          </SeqBox>
                        </Cell>
                        <Cell $tail={r.tail}>{r.code}</Cell>
                        <Cell>{r.name}</Cell>
                        <Cell $align="center" $tail={r.tail}>{r.unit}</Cell>
                        <Cell $align="right" $tail={r.tail}>{r.qty}</Cell>
                      </tr>
                    ))}
                  </tbody>
                </DataTable>
                <Marker />
                <SheetThumb />
              </Sheet>
            </RightPane>
          </WindowBody>

          <Footer>
            <PageText>当前第1页、共1页</PageText>
            <PageButton aria-label="首页"><Icon size={14} box={14} w={1}><path d="M1 0v14M13 1v12L4 7z" stroke="#aaa" /></Icon></PageButton>
            <PageButton aria-label="上一页"><Icon size={14} box={14} w={1}><path d="M7 1v4M7 9v4L1 7l6-6M13 1v12L6 7z" stroke="#aaa" /></Icon></PageButton>
            <PageInput defaultValue="1" aria-label="页码" />
            <PageButton aria-label="下一页"><Icon size={14} box={14} w={1}><path d="M1 1v12l7-6zM7 1l6 6-6 6" stroke="#aaa" /></Icon></PageButton>
            <PageButton aria-label="末页"><Icon size={14} box={14} w={1}><path d="M13 0v14M1 1v12l9-6z" stroke="#aaa" /></Icon></PageButton>
          </Footer>
        </Window>
      </Desktop>
    </>
  );
}
